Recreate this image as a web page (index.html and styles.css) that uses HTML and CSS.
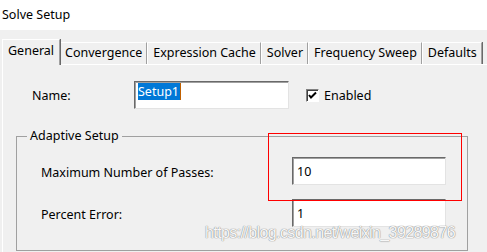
FILE: index.html
```html
<!DOCTYPE html>
<html>
<head>
<meta charset="utf-8">
<link rel="stylesheet" href="styles.css">
</head>
<body>
<div class="window">
  <div class="title">Solve Setup</div>
  <div class="dialog">
    <div class="tabs">
      <div class="tab active">General</div>
      <div class="tab">Convergence</div>
      <div class="tab">Expression Cache</div>
      <div class="tab">Solver</div>
      <div class="tab">Frequency Sweep</div>
      <div class="tab">Defaults</div>
    </div>
    <div class="panel">
      <div class="name-row">
        <span class="label">Name:</span>
        <div class="field"><span class="selected">Setup1</span><span class="caret"></span></div>
        <div class="check">
          <span class="box"><svg width="11" height="11" viewBox="0 0 11 11"><path d="M2 5 L4 7.5 L9 2.5" fill="none" stroke="#000" stroke-width="2"/></svg></span>
          <span>Enabled</span>
        </div>
      </div>
      <fieldset class="group">
        <legend>Adaptive Setup</legend>
        <div class="rows">
          <span class="label">Maximum Number of Passes:</span>
          <div class="field"><span class="value">10</span></div>
          <span class="label">Percent Error:</span>
          <div class="field"><span class="value">1</span></div>
        </div>
      </fieldset>
    </div>
  </div>
  <div class="highlight"></div>
  <div class="watermark">https://blog.csdn.net/weixin_39289876</div>
</div>
</body>
</html>
```

FILE: styles.css
```css
html, body {
  margin: 0;
  padding: 0;
}
body {
  width: 487px;
  height: 252px;
  overflow: hidden;
  background: #f0f0f0;
  font-family: "Noto Sans", "Open Sans", sans-serif;
  font-size: 12.5px;
  color: #000;
}
.window {
  position: relative;
  width: 487px;
  height: 252px;
  overflow: hidden;
}
.title {
  height: 30px;
  background: #fff;
  padding-left: 2px;
  line-height: 30px;
  box-sizing: border-box;
}
.dialog {
  padding: 9px 0 0 2px;
}
.tabs {
  display: flex;
  align-items: flex-end;
  height: 25px;
  position: relative;
  z-index: 1;
}
.tab {
  height: 22px;
  box-sizing: border-box;
  line-height: 20px;
  padding: 0 4px 0 5px;
  border-top: 1px solid #fff;
  border-left: 1px solid #fff;
  border-right: 1px solid #a0a0a0;
  box-shadow: 1px 0 0 #696969;
  background: #f0f0f0;
  white-space: nowrap;
}
.tab.active {
  height: 26px;
  margin-bottom: -1px;
  line-height: 22px;
  padding: 0 5px 0 5px;
  margin-right: 1px;
}
.tab.active + .tab {
  border-left: none;
  padding-left: 4px;
}
.panel {
  border-top: 1px solid #fff;
  border-left: 1px solid #fff;
  height: 200px;
  padding: 16px 0 0 0;
  box-sizing: border-box;
}
.name-row {
  display: grid;
  grid-template-columns: 102px 155px auto;
  align-items: center;
  padding-left: 29px;
}
.field {
  background: #fff;
  box-sizing: border-box;
  height: 28px;
  border: 1px solid;
  border-color: #696969 #e3e3e3 #e3e3e3 #696969;
  box-shadow: inset 1px 1px 0 #a0a0a0;
  padding: 1px 0 0 3px;
  display: flex;
  align-items: flex-start;
  line-height: 17px;
}
.selected {
  background: #0078d7;
  color: #fff;
  padding-right: 1px;
}
.caret {
  width: 1px;
  height: 17px;
  background: #c06000;
}
.check {
  display: flex;
  align-items: center;
  gap: 5px;
  margin-left: 17px;
}
.box {
  width: 13px;
  height: 13px;
  box-sizing: border-box;
  background: #fff;
  border: 1px solid;
  border-color: #808080 #fff #fff #808080;
  box-shadow: inset 1px 1px 0 #404040;
  display: flex;
  align-items: center;
  justify-content: center;
}
.group {
  margin: 18px 0 0 13px;
  width: 452px;
  height: 124px;
  box-sizing: border-box;
  border: 1px solid #a0a0a0;
  padding: 12px 0 0 0;
}
.group legend {
  margin-left: 10px;
  padding: 0 3px;
  line-height: 18px;
}
.rows {
  display: grid;
  grid-template-columns: 251px 154px;
  row-gap: 14px;
  align-items: center;
  padding-left: 24px;
}
.rows .label {
  padding-top: 2px;
}
.rows .field .value {
  padding-top: 4px;
  padding-left: 1px;
}
.highlight {
  position: absolute;
  left: 268px;
  top: 133px;
  width: 194px;
  height: 68px;
  box-sizing: border-box;
  border: 1px solid #ff0000;
}
.watermark {
  position: absolute;
  left: 205px;
  top: 224px;
  font-family: "Liberation Sans", Arial, sans-serif;
  font-size: 16px;
  letter-spacing: -0.6px;
  color: rgba(255, 255, 255, 0.95);
  text-shadow: 0 0 1px #888, 0 0 1px #888;
  white-space: nowrap;
}
```
